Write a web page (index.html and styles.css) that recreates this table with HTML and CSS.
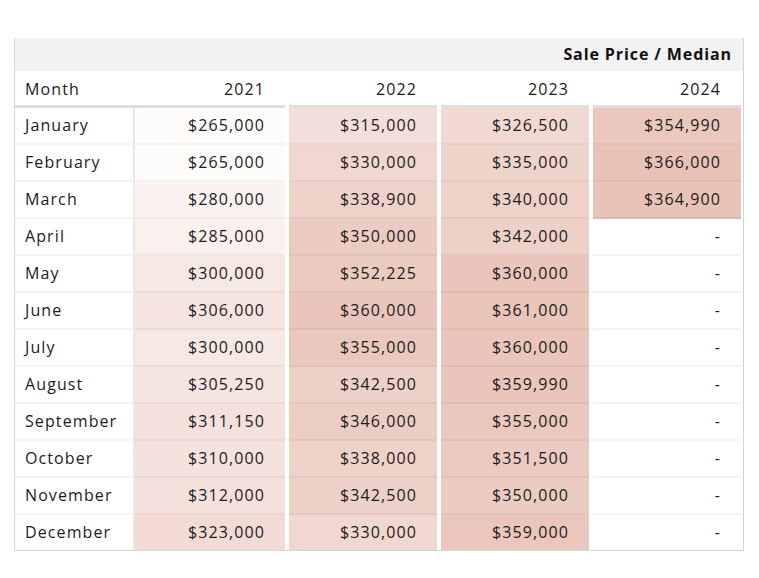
FILE: index.html
```html
<!DOCTYPE html>
<html>
<head>
<meta charset="utf-8">
<link rel="stylesheet" href="styles.css">
</head>
<body>
<div class="sheet">
  <div class="title">Sale Price / Median</div>
  <div class="row head">
    <div class="cell month">Month</div>
    <div class="cell num">2021</div>
    <div class="cell num">2022</div>
    <div class="cell num">2023</div>
    <div class="cell num">2024</div>
  </div>
  <div class="row">
    <div class="cell month">January</div>
    <div class="cell num" style="background:rgb(254,252,251)">$265,000</div>
    <div class="cell num" style="background:rgb(243,223,217)">$315,000</div>
    <div class="cell num" style="background:rgb(241,217,210)">$326,500</div>
    <div class="cell num" style="background:rgb(234,200,190)">$354,990</div>
  </div>
  <div class="row">
    <div class="cell month">February</div>
    <div class="cell num" style="background:rgb(254,252,251)">$265,000</div>
    <div class="cell num" style="background:rgb(240,215,207)">$330,000</div>
    <div class="cell num" style="background:rgb(239,212,204)">$335,000</div>
    <div class="cell num" style="background:rgb(232,194,183)">$366,000</div>
  </div>
  <div class="row">
    <div class="cell month">March</div>
    <div class="cell num" style="background:rgb(251,243,241)">$280,000</div>
    <div class="cell num" style="background:rgb(238,210,201)">$338,900</div>
    <div class="cell num" style="background:rgb(238,209,200)">$340,000</div>
    <div class="cell num" style="background:rgb(232,195,184)">$364,900</div>
  </div>
  <div class="row">
    <div class="cell month">April</div>
    <div class="cell num" style="background:rgb(250,241,238)">$285,000</div>
    <div class="cell num" style="background:rgb(235,203,194)">$350,000</div>
    <div class="cell num" style="background:rgb(237,208,199)">$342,000</div>
    <div class="cell num">-</div>
  </div>
  <div class="row">
    <div class="cell month">May</div>
    <div class="cell num" style="background:rgb(246,232,227)">$300,000</div>
    <div class="cell num" style="background:rgb(235,202,192)">$352,225</div>
    <div class="cell num" style="background:rgb(233,197,187)">$360,000</div>
    <div class="cell num">-</div>
  </div>
  <div class="row">
    <div class="cell month">June</div>
    <div class="cell num" style="background:rgb(245,228,223)">$306,000</div>
    <div class="cell num" style="background:rgb(233,197,187)">$360,000</div>
    <div class="cell num" style="background:rgb(233,197,186)">$361,000</div>
    <div class="cell num">-</div>
  </div>
  <div class="row">
    <div class="cell month">July</div>
    <div class="cell num" style="background:rgb(246,232,227)">$300,000</div>
    <div class="cell num" style="background:rgb(234,200,190)">$355,000</div>
    <div class="cell num" style="background:rgb(233,197,187)">$360,000</div>
    <div class="cell num">-</div>
  </div>
  <div class="row">
    <div class="cell month">August</div>
    <div class="cell num" style="background:rgb(245,229,224)">$305,250</div>
    <div class="cell num" style="background:rgb(237,208,199)">$342,500</div>
    <div class="cell num" style="background:rgb(233,197,187)">$359,990</div>
    <div class="cell num">-</div>
  </div>
  <div class="row">
    <div class="cell month">September</div>
    <div class="cell num" style="background:rgb(244,225,220)">$311,150</div>
    <div class="cell num" style="background:rgb(236,205,196)">$346,000</div>
    <div class="cell num" style="background:rgb(234,200,190)">$355,000</div>
    <div class="cell num">-</div>
  </div>
  <div class="row">
    <div class="cell month">October</div>
    <div class="cell num" style="background:rgb(244,226,221)">$310,000</div>
    <div class="cell num" style="background:rgb(238,210,202)">$338,000</div>
    <div class="cell num" style="background:rgb(235,202,193)">$351,500</div>
    <div class="cell num">-</div>
  </div>
  <div class="row">
    <div class="cell month">November</div>
    <div class="cell num" style="background:rgb(244,225,219)">$312,000</div>
    <div class="cell num" style="background:rgb(237,208,199)">$342,500</div>
    <div class="cell num" style="background:rgb(235,203,194)">$350,000</div>
    <div class="cell num">-</div>
  </div>
  <div class="row last">
    <div class="cell month">December</div>
    <div class="cell num" style="background:rgb(241,219,212)">$323,000</div>
    <div class="cell num" style="background:rgb(240,215,207)">$330,000</div>
    <div class="cell num" style="background:rgb(234,198,188)">$359,000</div>
    <div class="cell num">-</div>
  </div>
</div>
</body>
</html>
```

FILE: styles.css
```css
html, body {
  margin: 0;
  padding: 0;
  background: #ffffff;
}

body {
  font-family: "Open Sans", "Liberation Sans", sans-serif;
  font-size: 16px;
  color: #1c1c1c;
  letter-spacing: 1.1px;
}

.sheet {
  margin: 38px 0 0 14px;
  width: 730px;
  box-sizing: border-box;
  border-left: 1px solid #d4d4d4;
  border-right: 1px solid #d4d4d4;
  border-bottom: 1px solid #d4d4d4;
}

.title {
  height: 33px;
  background: #f2f2f2;
  display: flex;
  align-items: center;
  justify-content: flex-end;
  padding-right: 11px;
  padding-bottom: 1px;
  box-sizing: border-box;
  font-weight: 700;
  letter-spacing: 0.9px;
  color: #111111;
}

.row {
  display: grid;
  grid-template-columns: 120px 150px 152px 152px 154px;
}

.cell {
  box-sizing: border-box;
  height: 37px;
  display: flex;
  align-items: center;
  padding-bottom: 1px;
  border-bottom: 2px solid rgba(0, 0, 0, 0.045);
  background: #ffffff;
}

.row.last .cell {
  border-bottom: none;
  height: 35px;
}

.cell:nth-child(3),
.cell:nth-child(4),
.cell:nth-child(5) {
  margin-left: 4px;
}

.cell:nth-child(5) {
  margin-right: 2px;
}

.month {
  padding-left: 10px;
  border-right: 2px solid #e8e8e8;
}

.num {
  justify-content: flex-end;
  padding-right: 20px;
}

.head .cell {
  height: 37px;
  padding-bottom: 0;
  padding-top: 1px;
  border-bottom: 3px solid #dedede;
}

.head .month {
  border-right: none;
}
```
